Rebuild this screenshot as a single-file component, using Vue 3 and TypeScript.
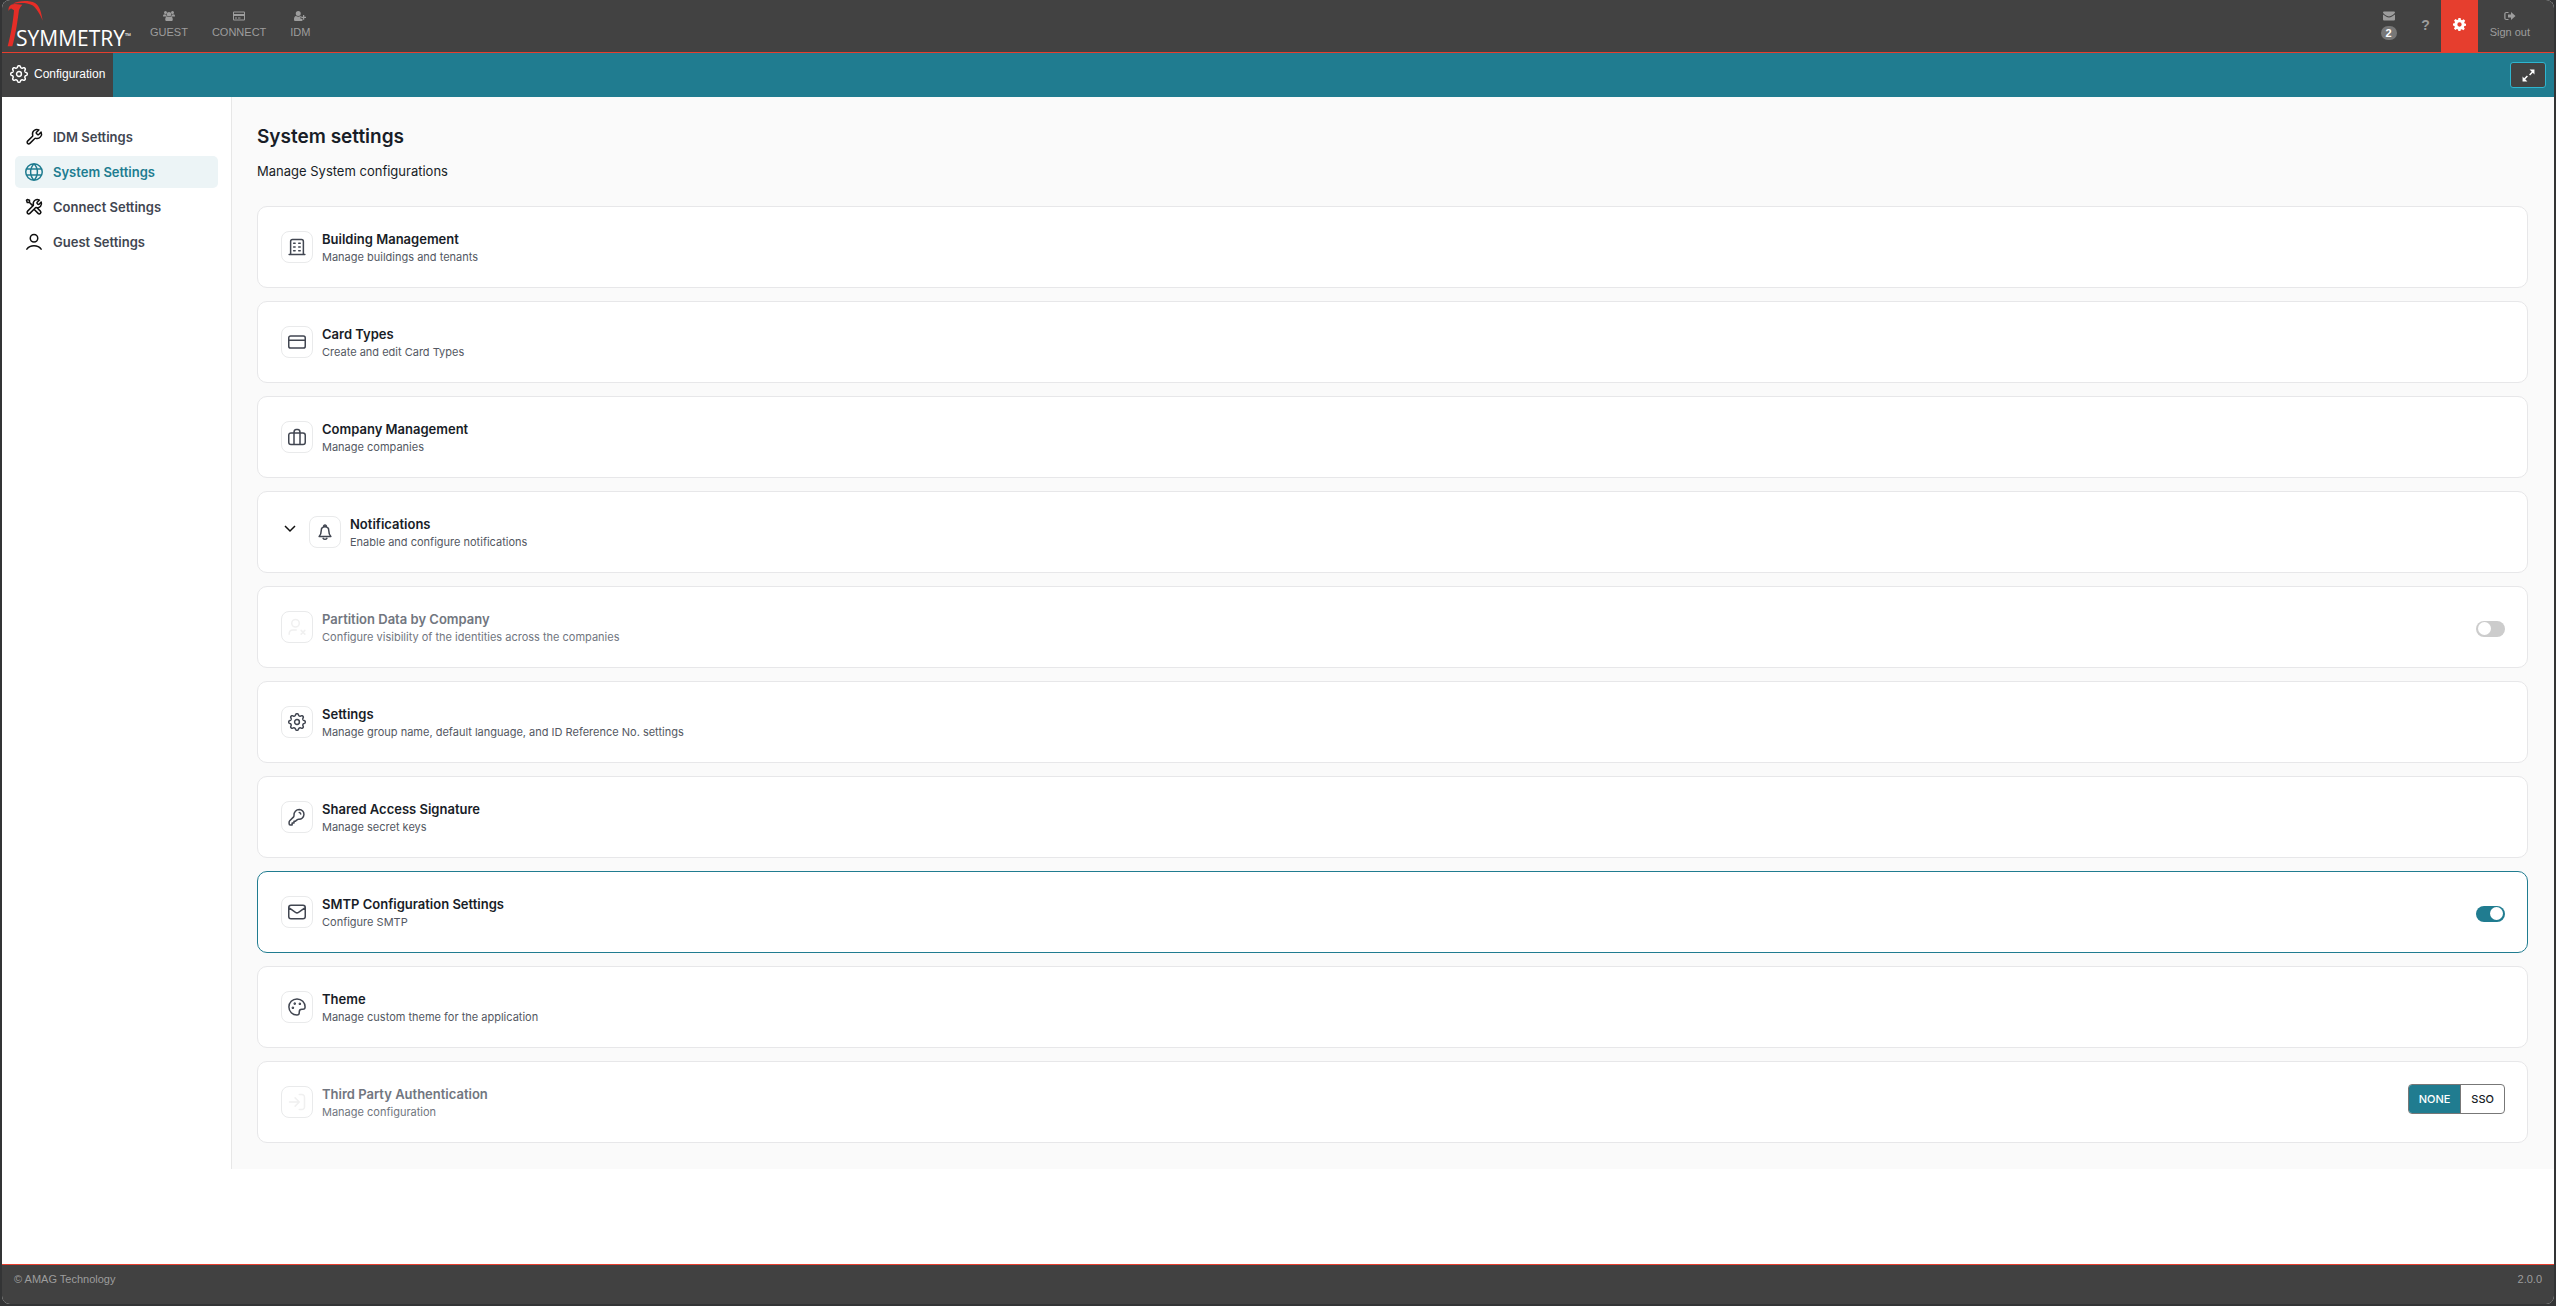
<script setup lang="ts">
import { ref } from 'vue'

interface SettingsCard {
  id: string
  title: string
  description: string
  icon: string
  expandable?: boolean
  disabled?: boolean
  control?: 'toggle' | 'segmented'
}

// Outline of an eight-lobed cog around a round hub.
function cogPath(): string {
  const steps = 128
  const points: string[] = []
  for (let i = 0; i < steps; i++) {
    const angle = (i / steps) * Math.PI * 2
    const wave = Math.cos(8 * angle)
    const radius = 9.8 + 1.3 * Math.tanh(1.6 * wave)
    points.push(`${(12 + radius * Math.cos(angle)).toFixed(2)} ${(12 + radius * Math.sin(angle)).toFixed(2)}`)
  }
  return `M${points.join('L')}z M12 8.800a3.200 3.200 0 1 1 0 6.400a3.200 3.200 0 1 1 0-6.400z`
}
const gear = cogPath()

const icons: Record<string, string> = {
  wrench:
    'M15.63 7.63c-.4-.4-.6-.6-.67-.82a1 1 0 0 1 0-.62c.07-.23.27-.43.67-.82l2.84-2.84A6 6 0 0 0 10.17 9.43c.12.49.18.73.17.88a.9.9 0 0 1-.11.4c-.07.13-.21.27-.48.54L3.5 17.5a2.12 2.12 0 0 0 3 3l6.25-6.25c.27-.27.41-.41.54-.48a.9.9 0 0 1 .4-.11c.15-.01.4.05.88.17A6 6 0 0 0 21.47 5.53l-2.84 2.84c-.4.4-.6.6-.82.67a1 1 0 0 1-.62 0c-.23-.07-.43-.27-.82-.67z',
  globe:
    'M12 1a11 11 0 1 0 0 22a11 11 0 1 0 0-22z M12 1c-6 6-6 16 0 22c6-6 6-16 0-22z M2 8h20 M2 16h20',
  tools:
    'M6 6l4.5 4.5M6 6H3L2 3l1-1 3 1v3zM19.26 2.74l-2.63 2.63c-.4.4-.6.6-.67.82a1 1 0 0 0 0 .62c.07.23.27.43.67.82l.24.24c.4.4.6.6.82.67a1 1 0 0 0 .62 0c.23-.07.43-.27.82-.67l2.46-2.46A5.5 5.5 0 0 1 15.43 12.9c-.49-.1-.73-.15-.88-.13a.9.9 0 0 0-.37.11c-.13.07-.26.2-.52.46L6.5 20.5a2.12 2.12 0 0 1-3-3l7.16-7.16c.26-.26.39-.39.46-.52a.9.9 0 0 0 .11-.37c.02-.15-.03-.39-.13-.88A5.5 5.5 0 0 1 19.26 2.74zM12 15l5.5 5.5a2.12 2.12 0 0 0 3-3l-4.52-4.52a5.5 5.5 0 0 1-.94-.18c-.39-.1-.82-.02-1.1.26L12 15z',
  user: 'M12 2a5 5 0 1 0 0 10a5 5 0 1 0 0-10z M2.5 21.5c2-3 5.5-4.5 9.5-4.5s7.5 1.5 9.5 4.5',
  gear,
  building:
    'M3.500 22V4.500C3.500 3 4.200 2 6 2h12c1.800 0 2.500 1 2.500 2.500V22 M1.500 22h21 M7.500 7h2 M14.300 7h2 M7.500 12h2 M14.300 12h2 M7.500 17h2 M14.300 17h2',
  card: 'M3.5 4h17A2.5 2.5 0 0 1 23 6.5v11a2.5 2.5 0 0 1-2.5 2.5h-17A2.5 2.5 0 0 1 1 17.5v-11A2.5 2.5 0 0 1 3.5 4z M1 9.5h22',
  briefcase:
    'M4 6.5h16a3 3 0 0 1 3 3V19a3 3 0 0 1-3 3H4a3 3 0 0 1-3-3V9.5a3 3 0 0 1 3-3z M8 22V6c0-2.500 1-4 3-4h2c2 0 3 1.500 3 4v16',
  bell: 'M9.5 20.5c1 1.6 4 1.6 5 0 M12 5c-3 0-5 2-5 5 0 4-1 6-2.800 8h15.600C18 16 17 14 17 10c0-3-2-5-5-5z M10.200 5c-.5-3 4.100-3 3.600 0',
  userX:
    'M10 2a5 5 0 1 0 0 10a5 5 0 1 0 0-10z M1.5 21.5c0-4 2-5.5 5-5.500h4.500 M17.500 16.500l5 5 M22.500 16.500l-5 5',
  key: 'M17 8a2.200 2.200 0 0 0-2-2 M15 2a7 7 0 0 0-7 7.500c.1 1.300 0 1.800-.5 2.300L2.300 17c-.6.6-.8 1-.8 1.800V21c0 1 .5 1.500 1.500 1.500h2.500V20h2.500v-2.500h2L12.500 15.500c.5-.4 1-.6 2-.5A6.500 6.500 0 1 0 15 2z',
  mail: 'M4 3h16a3 3 0 0 1 3 3v12a3 3 0 0 1-3 3H4a3 3 0 0 1-3-3V6a3 3 0 0 1 3-3z M1.500 6.500l8.500 6c1.500 1 2.500 1 4 0l8.500-6',
  palette:
    'M12 1.200C5.800 1.200 1.200 6 1.200 12S6 22.800 12 22.800c2 0 3-1.300 3-3v-1.300c0-2 1.500-3.500 3.500-3.500h1.300c1.700 0 3-1.200 3-3C22.800 6 18.200 1.200 12 1.200z M6.500 12.300a.7.7 0 1 0 .01 0z M9 6.800a.7.7 0 1 0 .01 0z M15.800 7a.7.7 0 1 0 .01 0z',
  login: 'M15 2h3.500A3.500 3.500 0 0 1 22 5.500v13a3.500 3.500 0 0 1-3.500 3.500H15 M2 12h13 M9.500 6.500L15 12l-5.500 5.500',
}

const sections = [
  { label: 'IDM Settings', icon: 'wrench' },
  { label: 'System Settings', icon: 'globe' },
  { label: 'Connect Settings', icon: 'tools' },
  { label: 'Guest Settings', icon: 'user' },
]
const activeSection = ref('System Settings')

const cards: SettingsCard[] = [
  { id: 'building', title: 'Building Management', description: 'Manage buildings and tenants', icon: 'building' },
  { id: 'card-types', title: 'Card Types', description: 'Create and edit Card Types', icon: 'card' },
  { id: 'company', title: 'Company Management', description: 'Manage companies', icon: 'briefcase' },
  { id: 'notifications', title: 'Notifications', description: 'Enable and configure notifications', icon: 'bell', expandable: true },
  { id: 'partition', title: 'Partition Data by Company', description: 'Configure visibility of the identities across the companies', icon: 'userX', disabled: true, control: 'toggle' },
  { id: 'settings', title: 'Settings', description: 'Manage group name, default language, and ID Reference No. settings', icon: 'gear' },
  { id: 'sas', title: 'Shared Access Signature', description: 'Manage secret keys', icon: 'key' },
  { id: 'smtp', title: 'SMTP Configuration Settings', description: 'Configure SMTP', icon: 'mail', control: 'toggle' },
  { id: 'theme', title: 'Theme', description: 'Manage custom theme for the application', icon: 'palette' },
  { id: 'auth', title: 'Third Party Authentication', description: 'Manage configuration', icon: 'login', disabled: true, control: 'segmented' },
]

const toggles = ref<Record<string, boolean>>({ partition: false, smtp: true })
const authModes = ['NONE', 'SSO']
const authMode = ref('NONE')
</script>

<template>
  <div class="app">
    <header class="topbar">
      <a class="logo" href="#" aria-label="Symmetry home">
        <svg class="logo-bird" viewBox="0 0 120 150" aria-hidden="true">
          <path d="M5 33C3 20 9 13 24 12L46 14 40 22 36 30C32 60 26 105 16 139H2C10 110 18 70 21 31L14 26C10 25 7 28 5 33z" />
          <path d="M18 11C32 2 66 0 84 9C98 17 103 38 107 62C99 44 90 26 76 16C60 7 38 8 18 11z" />
        </svg>
        <span class="logo-text">SYMMETRY</span><span class="logo-tm">™</span>
      </a>
      <nav class="products">
        <a href="#" class="top-link">
          <svg class="top-icon" viewBox="0 0 24 24" fill="currentColor" aria-hidden="true">
            <path d="M5 2a3 3 0 1 1 0 6a3 3 0 1 1 0-6z M19 2a3 3 0 1 1 0 6a3 3 0 1 1 0-6z M12 4a4.500 4.500 0 1 1 0 9a4.500 4.500 0 1 1 0-9z M0 13c0-3 1-4.500 3-4.500 1 .8 2.500.8 3.500.4 0 1.600.5 3 1.500 4.100H2c-1 0-2 0-2 0z M24 13c0-3-1-4.500-3-4.500-1 .8-2.500.8-3.500.4 0 1.600-.5 3-1.500 4.100h6z M4.500 19c0-3.500 1.500-6 4-6 2 1.500 5 1.500 7 0 2.500 0 4 2.500 4 6 0 2-1 3-3 3h-9c-2 0-3-1-3-3z" />
          </svg>
          GUEST
        </a>
        <a href="#" class="top-link">
          <svg class="top-icon" viewBox="0 0 24 24" fill="currentColor" fill-rule="evenodd" aria-hidden="true">
            <path d="M2 3h20a2 2 0 0 1 2 2v14a2 2 0 0 1-2 2H2a2 2 0 0 1-2-2V5a2 2 0 0 1 2-2z M2 5v3h20V5z M2 12v7h20v-7z M4 15h4v2H4z M10 15h5v2h-5z" />
          </svg>
          CONNECT
        </a>
        <a href="#" class="top-link">
          <svg class="top-icon" viewBox="0 0 24 24" fill="currentColor" aria-hidden="true">
            <path d="M8.500 2a5 5 0 1 1 0 10a5 5 0 1 1 0-10z M0 19c0-4 1.500-7 4-7 2.500 2 6.500 2 9 0 1 0 2 .5 2.500 1.500H13v4h4V21c-.5.7-1.500 1-2.500 1H3c-2 0-3-1-3-3z M18 10h2.500v3.500H24V16h-3.500v3.500H18V16h-3.500v-2.500H18z" />
          </svg>
          IDM
        </a>
      </nav>
      <div class="actions">
        <a href="#" class="top-link messages" aria-label="Messages">
          <svg class="top-icon" viewBox="0 0 24 24" fill="currentColor" aria-hidden="true">
            <path d="M0 5a2 2 0 0 1 2-2h20a2 2 0 0 1 2 2c0 2-8 8-12 8S0 7 0 5z M0 9c4 3 8 6 12 6s8-3 12-6v10a2 2 0 0 1-2 2H2a2 2 0 0 1-2-2z" />
          </svg>
          <span class="badge">2</span>
        </a>
        <a href="#" class="help" aria-label="Help">?</a>
        <a href="#" class="config" aria-label="Configuration">
          <svg viewBox="0 0 24 24" fill="currentColor" fill-rule="evenodd" aria-hidden="true">
            <path d="M10 0h4l.7 3.400 2 .9L19.700 2.400l2.800 2.800-1.900 2.900.9 2.100L24 10.500v3.700l-3 .6-.9 2.100 1.700 2.800-2.700 2.700-2.800-1.800-2 .8L13.800 24h-3.900l-.7-2.800-2-.8-2.800 1.800-2.700-2.700 1.800-2.800-.9-2L0 14v-4l2.800-.5.9-2.100-1.800-2.700L4.600 2l2.800 1.900 2-.8z M12 8a4 4 0 1 0 0 8a4 4 0 1 0 0-8z" />
          </svg>
        </a>
        <a href="#" class="top-link sign-out">
          <svg class="top-icon" viewBox="0 0 24 24" fill="currentColor" aria-hidden="true">
            <path d="M9 4v2H5c-1.500 0-2 .5-2 2v8c0 1.500.5 2 2 2h4v2H5c-3 0-4.500-1.500-4.500-4V8C.5 5.500 2 4 5 4z M8 9h6V4l9 8-9 8v-5H8z" />
          </svg>
          Sign out
        </a>
      </div>
    </header>

    <div class="tabbar">
      <a href="#" class="tab">
        <svg class="line-icon" viewBox="0 0 24 24" aria-hidden="true"><path :d="gear" /></svg>
        Configuration
      </a>
      <button type="button" class="fullscreen" aria-label="Full screen">
        <svg viewBox="0 0 24 24" fill="currentColor" aria-hidden="true">
          <path d="M14 1h9v9l-3-3-5 5-2-2 5-5z M10 23H1v-9l3 3 5-5 2 2-5 5z" />
        </svg>
      </button>
    </div>

    <div class="body">
      <nav class="sidebar" aria-label="Settings sections">
        <a
          v-for="section in sections"
          :key="section.label"
          href="#"
          class="side-link"
          :class="{ active: section.label === activeSection }"
          @click.prevent="activeSection = section.label"
        >
          <svg class="line-icon" viewBox="0 0 24 24" aria-hidden="true"><path :d="icons[section.icon]" /></svg>
          {{ section.label }}
        </a>
      </nav>

      <main class="content">
        <h1>System settings</h1>
        <p class="lead">Manage System configurations</p>

        <div class="cards">
          <section
            v-for="card in cards"
            :key="card.id"
            class="card"
            :class="{ disabled: card.disabled, selected: toggles[card.id] }"
          >
            <div class="summary">
              <button v-if="card.expandable" type="button" class="expand" aria-label="Expand notifications">
                <svg viewBox="0 0 12 8" aria-hidden="true"><path d="M1 1l5 5 5-5" /></svg>
              </button>
              <span class="icon-box">
                <svg class="line-icon" viewBox="0 0 24 24" aria-hidden="true"><path :d="icons[card.icon]" /></svg>
              </span>
              <div>
                <h2 :id="card.id">{{ card.title }}</h2>
                <p>{{ card.description }}</p>
              </div>
            </div>
            <input
              v-if="card.control === 'toggle'"
              v-model="toggles[card.id]"
              class="toggle"
              type="checkbox"
              role="switch"
              :aria-labelledby="card.id"
            />
            <div v-if="card.control === 'segmented'" class="segmented" role="group" :aria-labelledby="card.id">
              <button
                v-for="mode in authModes"
                :key="mode"
                type="button"
                :class="{ on: mode === authMode }"
                :aria-pressed="mode === authMode"
                @click="authMode = mode"
              >
                {{ mode }}
              </button>
            </div>
          </section>
        </div>
      </main>
    </div>

    <footer class="footer">
      <span>© AMAG Technology</span>
      <span>2.0.0</span>
    </footer>
  </div>
</template>

<style>
body {
  margin: 0;
  background: #333435;
}
</style>

<style scoped>
.app {
  box-sizing: border-box;
  display: flex;
  flex-direction: column;
  min-height: calc(100vh - 2px);
  margin: 0 2px 2px;
  overflow: hidden;
  border-radius: 8px;
  background: #fff;
  font-family: Inter, 'Liberation Sans', sans-serif;
  font-size: 13px;
}

a {
  color: inherit;
  text-decoration: none;
}

button {
  padding: 0;
  border: 0;
  background: none;
  font: inherit;
  color: inherit;
}

.line-icon {
  flex: none;
  width: 18px;
  height: 18px;
  overflow: visible;
  fill: none;
  stroke: currentColor;
  stroke-width: 2;
  stroke-linecap: round;
  stroke-linejoin: round;
}

.topbar {
  display: flex;
  height: 52px;
  border-bottom: 1px solid #e63e2e;
  background: #424242;
  color: #9d9d9d;
}

.logo {
  position: relative;
  display: flex;
  align-items: flex-end;
  width: 136px;
  color: #fff;
}

.logo-bird {
  position: absolute;
  left: 5px;
  top: 0;
  width: 40px;
  height: 50px;
  fill: #e52d27;
}

.logo-text {
  position: relative;
  padding-left: 14px;
  font: 21px/28px 'Open Sans', sans-serif;
}

.logo-tm {
  font: 8px/32px 'Open Sans', sans-serif;
}

.products,
.actions {
  display: flex;
}

.actions {
  margin-left: auto;
}

.top-link {
  display: flex;
  flex-direction: column;
  align-items: center;
  gap: 3px;
  padding: 10px 12px 0;
  font: 11px/14px 'Liberation Sans', sans-serif;
}

.top-icon {
  width: 12px;
  height: 12px;
}

.messages {
  gap: 4px;
  padding: 10px 14px 0;
}

.badge {
  padding: 0 5px;
  border-radius: 7px;
  background: #777;
  color: #fff;
  font-weight: 700;
}

.help {
  width: 30px;
  font: 700 14px/50px 'Liberation Sans', sans-serif;
  text-align: center;
}

.config {
  display: flex;
  justify-content: center;
  width: 37px;
  height: 53px;
  background: #e63e2e;
  color: #fff;
}

.config svg {
  width: 13px;
  margin-bottom: 4px;
}

.sign-out {
  padding-right: 24px;
}

.tabbar {
  display: flex;
  align-items: center;
  justify-content: space-between;
  height: 44px;
  padding-right: 8px;
  background: #207c90;
}

.tab {
  display: flex;
  align-items: center;
  gap: 6px;
  height: 42px;
  padding: 0 8px 2px;
  background: #424242;
  color: #fff;
  font: 12px/16px 'Liberation Sans', sans-serif;
}

.fullscreen {
  display: flex;
  align-items: center;
  justify-content: center;
  width: 36px;
  height: 26px;
  border: 1px solid #2fb5cf;
  border-radius: 3px;
  background: #424242;
  color: #fff;
}

.fullscreen svg {
  width: 13px;
}

.body {
  display: flex;
}

.sidebar {
  display: flex;
  flex: none;
  flex-direction: column;
  gap: 3px;
  box-sizing: border-box;
  width: 230px;
  padding: 24px 13px;
  border-right: 1px solid #e7e7e7;
}

.side-link {
  display: flex;
  align-items: center;
  gap: 10px;
  height: 31px;
  padding: 0 10px 1px;
  border-radius: 5px;
  color: #414651;
  font-weight: 600;
}

.side-link .line-icon {
  color: #101010;
}

.side-link.active,
.side-link.active .line-icon {
  color: #207c90;
}

.side-link.active {
  background: #ecf4f6;
}

.content {
  flex: 1;
  padding: 28px 26px 26px 25px;
  background: #fafafa;
  color: #181d27;
}

h1 {
  margin: 0;
  font-size: 19px;
  line-height: 24px;
  font-weight: 600;
}

.lead {
  margin: 12px 0 25px;
  font-size: 13px;
  line-height: 20px;
}

.cards {
  display: flex;
  flex-direction: column;
  gap: 13px;
}

.card {
  display: flex;
  align-items: flex-start;
  justify-content: space-between;
  min-height: 58px;
  padding: 22px 22px 0 23px;
  border: 1px solid #e7e7e9;
  border-radius: 10px;
  background: #fff;
}

.card.selected {
  border-color: #207c90;
}

.summary {
  display: flex;
  gap: 9px;
  padding-top: 2px;
}

.icon-box {
  display: flex;
  align-items: center;
  justify-content: center;
  box-sizing: border-box;
  width: 32px;
  height: 32px;
  border: 1px solid #e9eaeb;
  border-radius: 8px;
  color: #414651;
}

h2 {
  margin: 0 0 2px;
  font-size: 13px;
  line-height: 16px;
  font-weight: 600;
}

.summary p {
  margin: 0;
  color: #535862;
  font-size: 11px;
  line-height: 16px;
}

.disabled h2,
.disabled p {
  color: #717680;
}

.disabled .icon-box {
  color: #f0f0f0;
}

.expand {
  display: flex;
  align-items: center;
  width: 19px;
  height: 26px;
  padding-left: 3px;
}

.expand svg {
  width: 12px;
  fill: none;
  stroke: #101010;
  stroke-width: 1.5;
}

.toggle {
  appearance: none;
  box-sizing: border-box;
  width: 29px;
  height: 16px;
  margin: 12px 0 0;
  padding: 1px 2px;
  border-radius: 8px;
  background: #ccc;
}

.toggle::before {
  content: '';
  display: block;
  width: 13px;
  height: 13px;
  border-radius: 50%;
  background: #fff;
}

.toggle:checked {
  background: #207c90;
}

.toggle:checked::before {
  margin-left: auto;
}

.segmented {
  display: flex;
  border: 1px solid #777;
  border-radius: 4px;
  overflow: hidden;
}

.segmented button {
  height: 28px;
  padding: 0 10px 1px;
  font-size: 11px;
  font-weight: 500;
}

.segmented .on {
  border-right: 1px solid #777;
  background: #207c90;
  color: #fff;
}

.footer {
  display: flex;
  justify-content: space-between;
  height: 39px;
  margin-top: auto;
  padding: 0 12px;
  border-top: 1px solid #e63e2e;
  background: #414141;
  color: #9d9d9d;
  font: 11px/28px 'Liberation Sans', sans-serif;
}
</style>
